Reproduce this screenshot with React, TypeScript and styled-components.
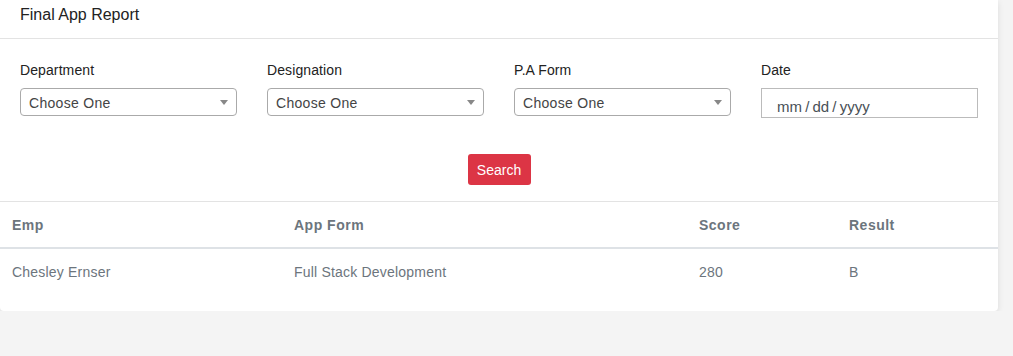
import React from "react";
import styled, { createGlobalStyle } from "styled-components";

const Global = createGlobalStyle`
  html, body { margin: 0; padding: 0; background: #f4f4f4; }
  body { font-family: "Liberation Sans", Arial, sans-serif; }
  * { box-sizing: border-box; }
`;

const Card = styled.div`
  width: 998px;
  background: #fff;
  border-radius: 0 0 4px 4px;
  box-shadow: 0 2px 6px rgba(0, 0, 0, 0.1);
  padding-bottom: 17px;
`;

const Header = styled.div`
  height: 39px;
  padding: 4px 20px 0;
  border-bottom: 1px solid #e3e3e3;
  font-size: 16px;
  line-height: 22px;
  color: #222;
`;

const Form = styled.div`
  padding: 21px 20px 0;
`;

const Fields = styled.div`
  display: grid;
  grid-template-columns: repeat(4, 217px);
  column-gap: 30px;
`;

const Field = styled.div`
  display: flex;
  flex-direction: column;
`;

const Label = styled.div`
  font-size: 14px;
  line-height: 20px;
  color: #222;
  margin-bottom: 8px;
  letter-spacing: 0.1px;
`;

const Select = styled.div`
  position: relative;
  height: 28px;
  border: 1px solid #aaa;
  border-radius: 4px;
  padding: 1px 0 0 8px;
  font-size: 14px;
  line-height: 26px;
  color: #444;
  letter-spacing: 0.3px;
`;

const Arrow = styled.span`
  position: absolute;
  right: 8px;
  top: 11px;
  width: 0;
  height: 0;
  border-left: 4px solid transparent;
  border-right: 4px solid transparent;
  border-top: 5px solid #888;
`;

const DateInput = styled.div`
  height: 30px;
  border: 1px solid #bbb;
  padding: 8px 0 0 15px;
  font-size: 15px;
  line-height: 20px;
  color: #495057;
  word-spacing: -1px;
`;

const Actions = styled.div`
  display: flex;
  justify-content: center;
  margin-top: 36px;
`;

const Button = styled.button`
  height: 31px;
  width: 63px;
  border: none;
  border-radius: 3px;
  background: #dc3545;
  color: #fff;
  font-family: "Liberation Sans", Arial, sans-serif;
  font-size: 14px;
  padding: 0;
`;

const Table = styled.table`
  width: 100%;
  margin-top: 16px;
  border-collapse: collapse;
  font-size: 14px;
  color: #6c757d;
`;

const Th = styled.th<{ $w?: number }>`
  width: ${(p) => (p.$w ? `${p.$w}px` : "auto")};
  text-align: left;
  font-weight: bold;
  padding: 13px 12px 11px;
  line-height: 21px;
  letter-spacing: 0.5px;
  border-top: 1px solid #e3e3e3;
  border-bottom: 2px solid #dee2e6;
`;

const Td = styled.td`
  padding: 13px 12px 11px;
  line-height: 21px;
  letter-spacing: 0.2px;
`;

export default function App() {
  const fields = ["Department", "Designation", "P.A Form"];
  return (
    <>
      <Global />
      <Card>
        <Header>Final App Report</Header>
        <Form>
          <Fields>
            {fields.map((f) => (
              <Field key={f}>
                <Label>{f}</Label>
                <Select>
                  Choose One
                  <Arrow />
                </Select>
              </Field>
            ))}
            <Field>
              <Label>Date</Label>
              <DateInput>mm / dd / yyyy</DateInput>
            </Field>
          </Fields>
          <Actions>
            <Button>Search</Button>
          </Actions>
        </Form>
        <Table>
          <thead>
            <tr>
              <Th $w={282}>Emp</Th>
              <Th $w={405}>App Form</Th>
              <Th $w={150}>Score</Th>
              <Th>Result</Th>
            </tr>
          </thead>
          <tbody>
            <tr>
              <Td>Chesley Ernser</Td>
              <Td>Full Stack Development</Td>
              <Td>280</Td>
              <Td>B</Td>
            </tr>
          </tbody>
        </Table>
      </Card>
    </>
  );
}
